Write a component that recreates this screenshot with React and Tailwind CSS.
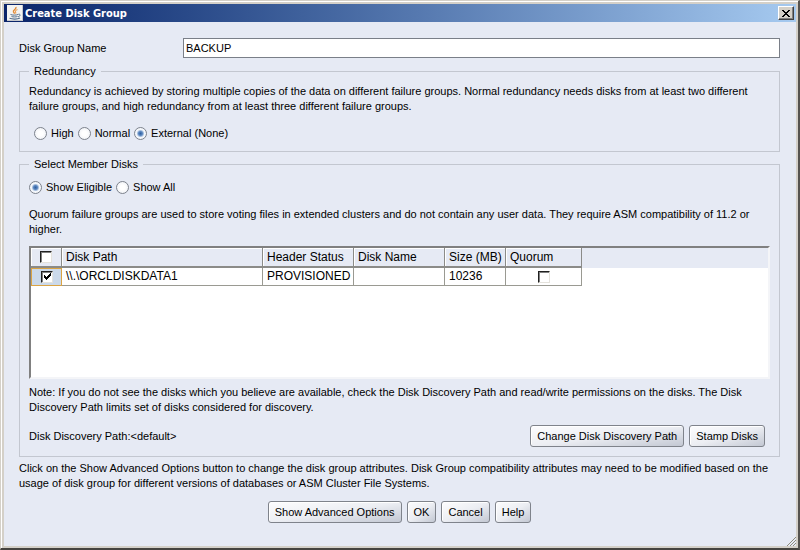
import { useState } from "react";

const buttonClass =
  "h-[22px] cursor-pointer whitespace-nowrap rounded-[3px] border border-[#7f838b] bg-gradient-to-br from-[#fdfdfe] via-[#eceef3] to-[#c3c8d3] px-1.5 shadow-[inset_1px_1px_0_#ffffff]";

const Radio = ({ name, label, checked, onChange }) => (
  <label className="flex items-center gap-1">
    <input
      type="radio"
      name={name}
      checked={checked}
      onChange={onChange}
      className="size-[13px] appearance-none rounded-full border border-[#7d828c] bg-[radial-gradient(circle,#ffffff_30%,#e9ecf2_100%)] checked:bg-[radial-gradient(circle,#2f5f9f_0px,#5b87c0_2px,#f4f7fb_4px)]"
    />
    {label}
  </label>
);

const Checkbox = ({ label, checked, onChange }) => (
  <span className="relative mx-auto block size-3">
    <input
      type="checkbox"
      aria-label={label}
      checked={checked}
      onChange={onChange}
      className="block size-3 appearance-none border border-t-[#202020] border-l-[#202020] border-r-[#e4e2dc] border-b-[#e4e2dc] bg-white shadow-[inset_1px_1px_0_#808080]"
    />
    {checked && (
      <svg
        viewBox="0 0 12 12"
        className="pointer-events-none absolute inset-0 size-3"
        shapeRendering="crispEdges"
      >
        <path d="M3 4v3h1v1h1v1h1V8h1V7h1V6h1V5h1V2H9v1H8v1H7v1H6v1H5V5H4V4z" />
      </svg>
    )}
  </span>
);

const JavaIcon = () => (
  <svg viewBox="0 0 16 16" className="size-4 shrink-0" fill="none">
    <rect width="16" height="16" fill="#f3f3f1" />
    <path d="M0 15.5h16M15.5 0v16" stroke="#c6c8cc" />
    <path d="M9 2C9.500 4.500 5.500 5 6.500 7c.4.7 1 1 1 1.800" stroke="#e0862e" strokeWidth="1.400" />
    <path d="M10.500 4.500C8 5.500 8 6.500 9 8.500" stroke="#eda155" strokeWidth="1.200" />
    <path d="M3.500 9.500c1.500.8 6 .8 7.500 0M4.500 11.500c1.500.6 4.500.6 6 0M11.300 9.300c2.700-.6 2.200 2-.3 2.600" stroke="#56708c" />
    <path d="M2.500 13.300c3 1.100 8 1.100 10.500-.3" stroke="#56708c" strokeWidth="1.200" />
  </svg>
);

const headers = ["Disk Path", "Header Status", "Disk Name", "Size (MB)", "Quorum"];

const headCell =
  "h-5 border-r border-b-2 border-[#8b8b88] bg-[#e6eaf4] shadow-[inset_1px_1px_0_#ffffff]";
const bodyCell = "h-[18px] border-r border-b border-[#9a9a92] px-1";

const App = () => {
  const [redundancy, setRedundancy] = useState("External (None)");
  const [show, setShow] = useState("Show Eligible");
  const [name, setName] = useState("BACKUP");
  const [selected, setSelected] = useState(true);
  const [quorum, setQuorum] = useState(false);

  return (
    <div className="flex min-h-screen flex-col border-t border-r-2 border-b-2 border-l border-t-[#d4d0c8] border-r-[#55534f] border-b-[#45433f] border-l-[#d4d0c8] bg-[#d4d0c8] font-['Liberation_Sans',Arial,sans-serif] text-[11px] leading-[15px] text-black">
      <div className="flex flex-1 flex-col border-t border-l border-white p-0.5">
        {/* Title bar */}
        <header className="flex h-[18px] items-center bg-gradient-to-r from-[#0a246a] to-[#a6caf0] pr-0.5 pl-[3px]">
          <JavaIcon />
          <h1 className="ml-0.5 flex-1 font-['DejaVu_Sans_Condensed','DejaVu_Sans',sans-serif] text-[11px] font-bold text-white">
            Create Disk Group
          </h1>
          <button
            aria-label="Close"
            className="flex h-3.5 w-4 items-center justify-center border border-t-white border-r-[#404040] border-b-[#404040] border-l-white bg-[#d4d0c8] shadow-[inset_-1px_-1px_0_#808080]"
          >
            <svg viewBox="0 0 8 7" className="h-[7px] w-2" shapeRendering="crispEdges">
              <path d="M0 0h2v1h1v1h2V1h1V0h2v1H7v1H6v1H5v1h1v1h1v1h1v1H6V6H5V5H3v1H2v1H0V6h1V5h1V4h1V3H2V2H1V1H0z" />
            </svg>
          </button>
        </header>

        <main className="relative flex-1 bg-[#e6eaf4] pt-4 pr-4 pl-[15px]">
          <div className="flex items-center">
            <label htmlFor="group-name" className="w-[164px] shrink-0">
              Disk Group Name
            </label>
            <input
              id="group-name"
              value={name}
              onChange={(e) => setName(e.target.value)}
              className="h-5 min-w-0 flex-1 border border-[#7a7f88] bg-white px-0.5 outline-none"
            />
          </div>

          {/* Redundancy */}
          <fieldset className="mt-1.5 border border-[#c3c7d0] px-[9px] pb-2.5">
            <legend className="px-[5px]">Redundancy</legend>
            <p className="mt-[5px]">
              Redundancy is achieved by storing multiple copies of the data on different failure groups. Normal
              redundancy needs disks from at least two different failure groups, and high redundancy from at least
              three different failure groups.
            </p>
            <div className="mt-3 flex gap-1 pl-[5px]">
              {["High", "Normal", "External (None)"].map((item) => (
                <Radio
                  key={item}
                  name="redundancy"
                  label={item}
                  checked={redundancy === item}
                  onChange={() => setRedundancy(item)}
                />
              ))}
            </div>
          </fieldset>

          {/* Member disks */}
          <fieldset className="mt-[5px] min-w-0 border border-[#c3c7d0] px-[9px] pb-[9px]">
            <legend className="px-[5px]">Select Member Disks</legend>
            <div className="mt-2 flex gap-1">
              {["Show Eligible", "Show All"].map((item) => (
                <Radio
                  key={item}
                  name="show"
                  label={item}
                  checked={show === item}
                  onChange={() => setShow(item)}
                />
              ))}
            </div>
            <p className="mt-3">
              Quorum failure groups are used to store voting files in extended clusters and do not contain any user
              data. They require ASM compatibility of 11.2 or higher.
            </p>

            <div className="mt-[9px] min-h-[133px] border-2 border-t-[#808080] border-r-[#f4f5f8] border-b-[#f4f5f8] border-l-[#808080] bg-white text-[12px]">
              <div className="bg-[#e6eaf4]">
                <table className="w-full table-fixed border-separate border-spacing-0 text-left">
                  <colgroup>
                    <col className="w-[31px]" />
                    <col className="w-[201px]" />
                    <col className="w-[91px]" />
                    <col className="w-[91px]" />
                    <col className="w-[61px]" />
                    <col className="w-[76px]" />
                    <col />
                  </colgroup>
                  <thead>
                    <tr>
                      <th className={headCell}>
                        <Checkbox
                          label="Select all disks"
                          checked={false}
                          onChange={() => setSelected(true)}
                        />
                      </th>
                      {headers.map((h) => (
                        <th key={h} className={`${headCell} whitespace-nowrap pl-1 font-normal`}>
                          {h}
                        </th>
                      ))}
                      <td />
                    </tr>
                  </thead>
                  <tbody className="bg-white">
                    <tr>
                      <td className="h-[18px] bg-[#cbd9ea] shadow-[inset_0_0_0_1px_#dba444]">
                        <Checkbox
                          label="Select disk"
                          checked={selected}
                          onChange={() => setSelected(!selected)}
                        />
                      </td>
                      <td className={bodyCell}>{"\\\\.\\ORCLDISKDATA1"}</td>
                      <td className={bodyCell}>PROVISIONED</td>
                      <td className={bodyCell} />
                      <td className={bodyCell}>10236</td>
                      <td className={bodyCell}>
                        <Checkbox label="Quorum" checked={quorum} onChange={() => setQuorum(!quorum)} />
                      </td>
                      <td />
                    </tr>
                  </tbody>
                </table>
              </div>
            </div>

            <p className="mt-1.5">
              Note: If you do not see the disks which you believe are available, check the Disk Discovery Path and
              read/write permissions on the disks. The Disk Discovery Path limits set of disks considered for
              discovery.
            </p>
            <div className="mt-2.5 flex items-center gap-[5px] pr-[5px]">
              <span className="flex-1">Disk Discovery Path:&lt;default&gt;</span>
              <button className={buttonClass}>Change Disk Discovery Path</button>
              <button className={buttonClass}>Stamp Disks</button>
            </div>
          </fieldset>

          <p className="mt-1">
            Click on the Show Advanced Options button to change the disk group attributes. Disk Group compatibility
            attributes may need to be modified based on the usage of disk group for different versions of databases
            or ASM Cluster File Systems.
          </p>

          <div className="mt-2.5 mb-5 flex justify-center gap-[5px]">
            <button className={buttonClass}>Show Advanced Options</button>
            <button className={buttonClass}>OK</button>
            <button className={buttonClass}>Cancel</button>
            <button className={buttonClass}>Help</button>
          </div>

          {/* Resize grip */}
          <svg viewBox="0 0 10 10" className="absolute right-0 bottom-0 size-2.5" fill="none">
            <path d="M1 10l9-9M4 10l6-6M7 10l3-3" stroke="#8d8b7c" />
          </svg>
        </main>
      </div>
    </div>
  );
};

export default App;
